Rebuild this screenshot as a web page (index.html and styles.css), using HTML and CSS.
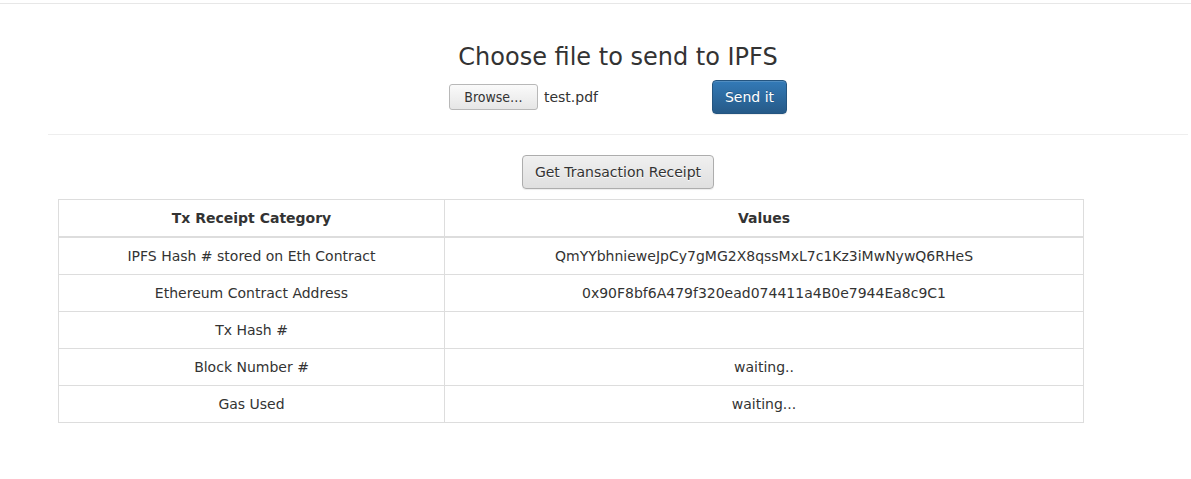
FILE: index.html
```html
<!DOCTYPE html>
<html lang="en">
<head>
<meta charset="utf-8">
<title>IPFS Upload</title>
<link rel="stylesheet" href="styles.css">
</head>
<body>
<div class="topbar"></div>
<div class="container">
  <h3 class="title">Choose file to send to IPFS</h3>
  <form class="upload-form">
    <div class="file-input">
      <span class="browse-btn">Browse…</span>
      <span class="file-name">test.pdf</span>
    </div>
    <button type="button" class="btn btn-primary">Send it</button>
  </form>
  <hr class="divider">
  <div class="receipt-action">
    <button type="button" class="btn btn-default">Get Transaction Receipt</button>
  </div>
  <table class="receipt-table">
    <thead>
      <tr>
        <th class="col-cat">Tx Receipt Category</th>
        <th>Values</th>
      </tr>
    </thead>
    <tbody>
      <tr><td>IPFS Hash # stored on Eth Contract</td><td class="val">QmYYbhnieweJpCy7gMG2X8qssMxL7c1Kz3iMwNywQ6RHeS</td></tr>
      <tr><td>Ethereum Contract Address</td><td class="val">0x90F8bf6A479f320ead074411a4B0e7944Ea8c9C1</td></tr>
      <tr><td>Tx Hash #</td><td class="val"></td></tr>
      <tr><td>Block Number #</td><td class="val">waiting..</td></tr>
      <tr><td>Gas Used</td><td class="val">waiting...</td></tr>
    </tbody>
  </table>
</div>
</body>
</html>
```

FILE: styles.css
```css
* { box-sizing: border-box; }

body {
  margin: 0;
  font-family: "DejaVu Sans", sans-serif;
  font-size: 14px;
  line-height: 20px;
  color: #333;
  background: #fff;
}

.topbar {
  height: 4px;
  border-bottom: 1px solid #e7e7e7;
}

.container {
  margin-left: 48px;
  width: 1140px;
}

.title {
  margin: 40px 0 10px;
  font-size: 24px;
  font-weight: 500;
  line-height: 26.4px;
  text-align: center;
  color: #333;
}

.upload-form {
  display: flex;
  justify-content: center;
  align-items: center;
  gap: 4px;
  margin: 0;
}

.file-input {
  width: 259px;
  display: flex;
  align-items: center;
  gap: 6px;
}

.browse-btn {
  display: inline-block;
  width: 89px;
  height: 26px;
  line-height: 24px;
  text-align: center;
  font-family: "DejaVu Sans Condensed", "DejaVu Sans", sans-serif;
  font-stretch: condensed;
  font-size: 14px;
  color: #333;
  border: 1px solid #b8b8b8;
  border-radius: 3px;
  background: linear-gradient(#fafafa, #e6e6e6);
}

.file-name {
  color: #333;
}

.btn {
  display: inline-block;
  padding: 6px 12px;
  font-family: "DejaVu Sans", sans-serif;
  font-size: 14px;
  line-height: 20px;
  border-radius: 4px;
  border: 1px solid transparent;
  cursor: pointer;
  white-space: nowrap;
}

.btn-primary {
  color: #fff;
  background: linear-gradient(to bottom, #337ab7 0, #265a88 100%);
  border-color: #245580;
  text-shadow: 0 -1px 0 rgba(0, 0, 0, .2);
  box-shadow: inset 0 1px 0 rgba(255, 255, 255, .15), 0 1px 1px rgba(0, 0, 0, .075);
}

.btn-default {
  color: #333;
  background: linear-gradient(to bottom, #f0f0f0 0, #e0e0e0 100%);
  border-color: #adadad;
  text-shadow: 0 1px 0 #fff;
  box-shadow: inset 0 1px 0 rgba(255, 255, 255, .15), 0 1px 1px rgba(0, 0, 0, .075);
}

.divider {
  margin: 20px 0;
  border: 0;
  border-top: 1px solid #eee;
}

.receipt-action {
  display: flex;
  justify-content: center;
}

.receipt-table {
  margin: 10px 0 0 10px;
  width: 1026px;
  border-collapse: collapse;
  border: 1px solid #ddd;
}

.receipt-table th,
.receipt-table td {
  padding: 8px;
  line-height: 20px;
  text-align: center;
  border: 1px solid #ddd;
  vertical-align: top;
  height: 37px;
}

.receipt-table thead th {
  border-bottom: 2px solid #ddd;
  font-weight: bold;
  vertical-align: bottom;
}

.col-cat {
  width: 386px;
}

.val {
  font-family: "DejaVu Sans", sans-serif;
}
```
